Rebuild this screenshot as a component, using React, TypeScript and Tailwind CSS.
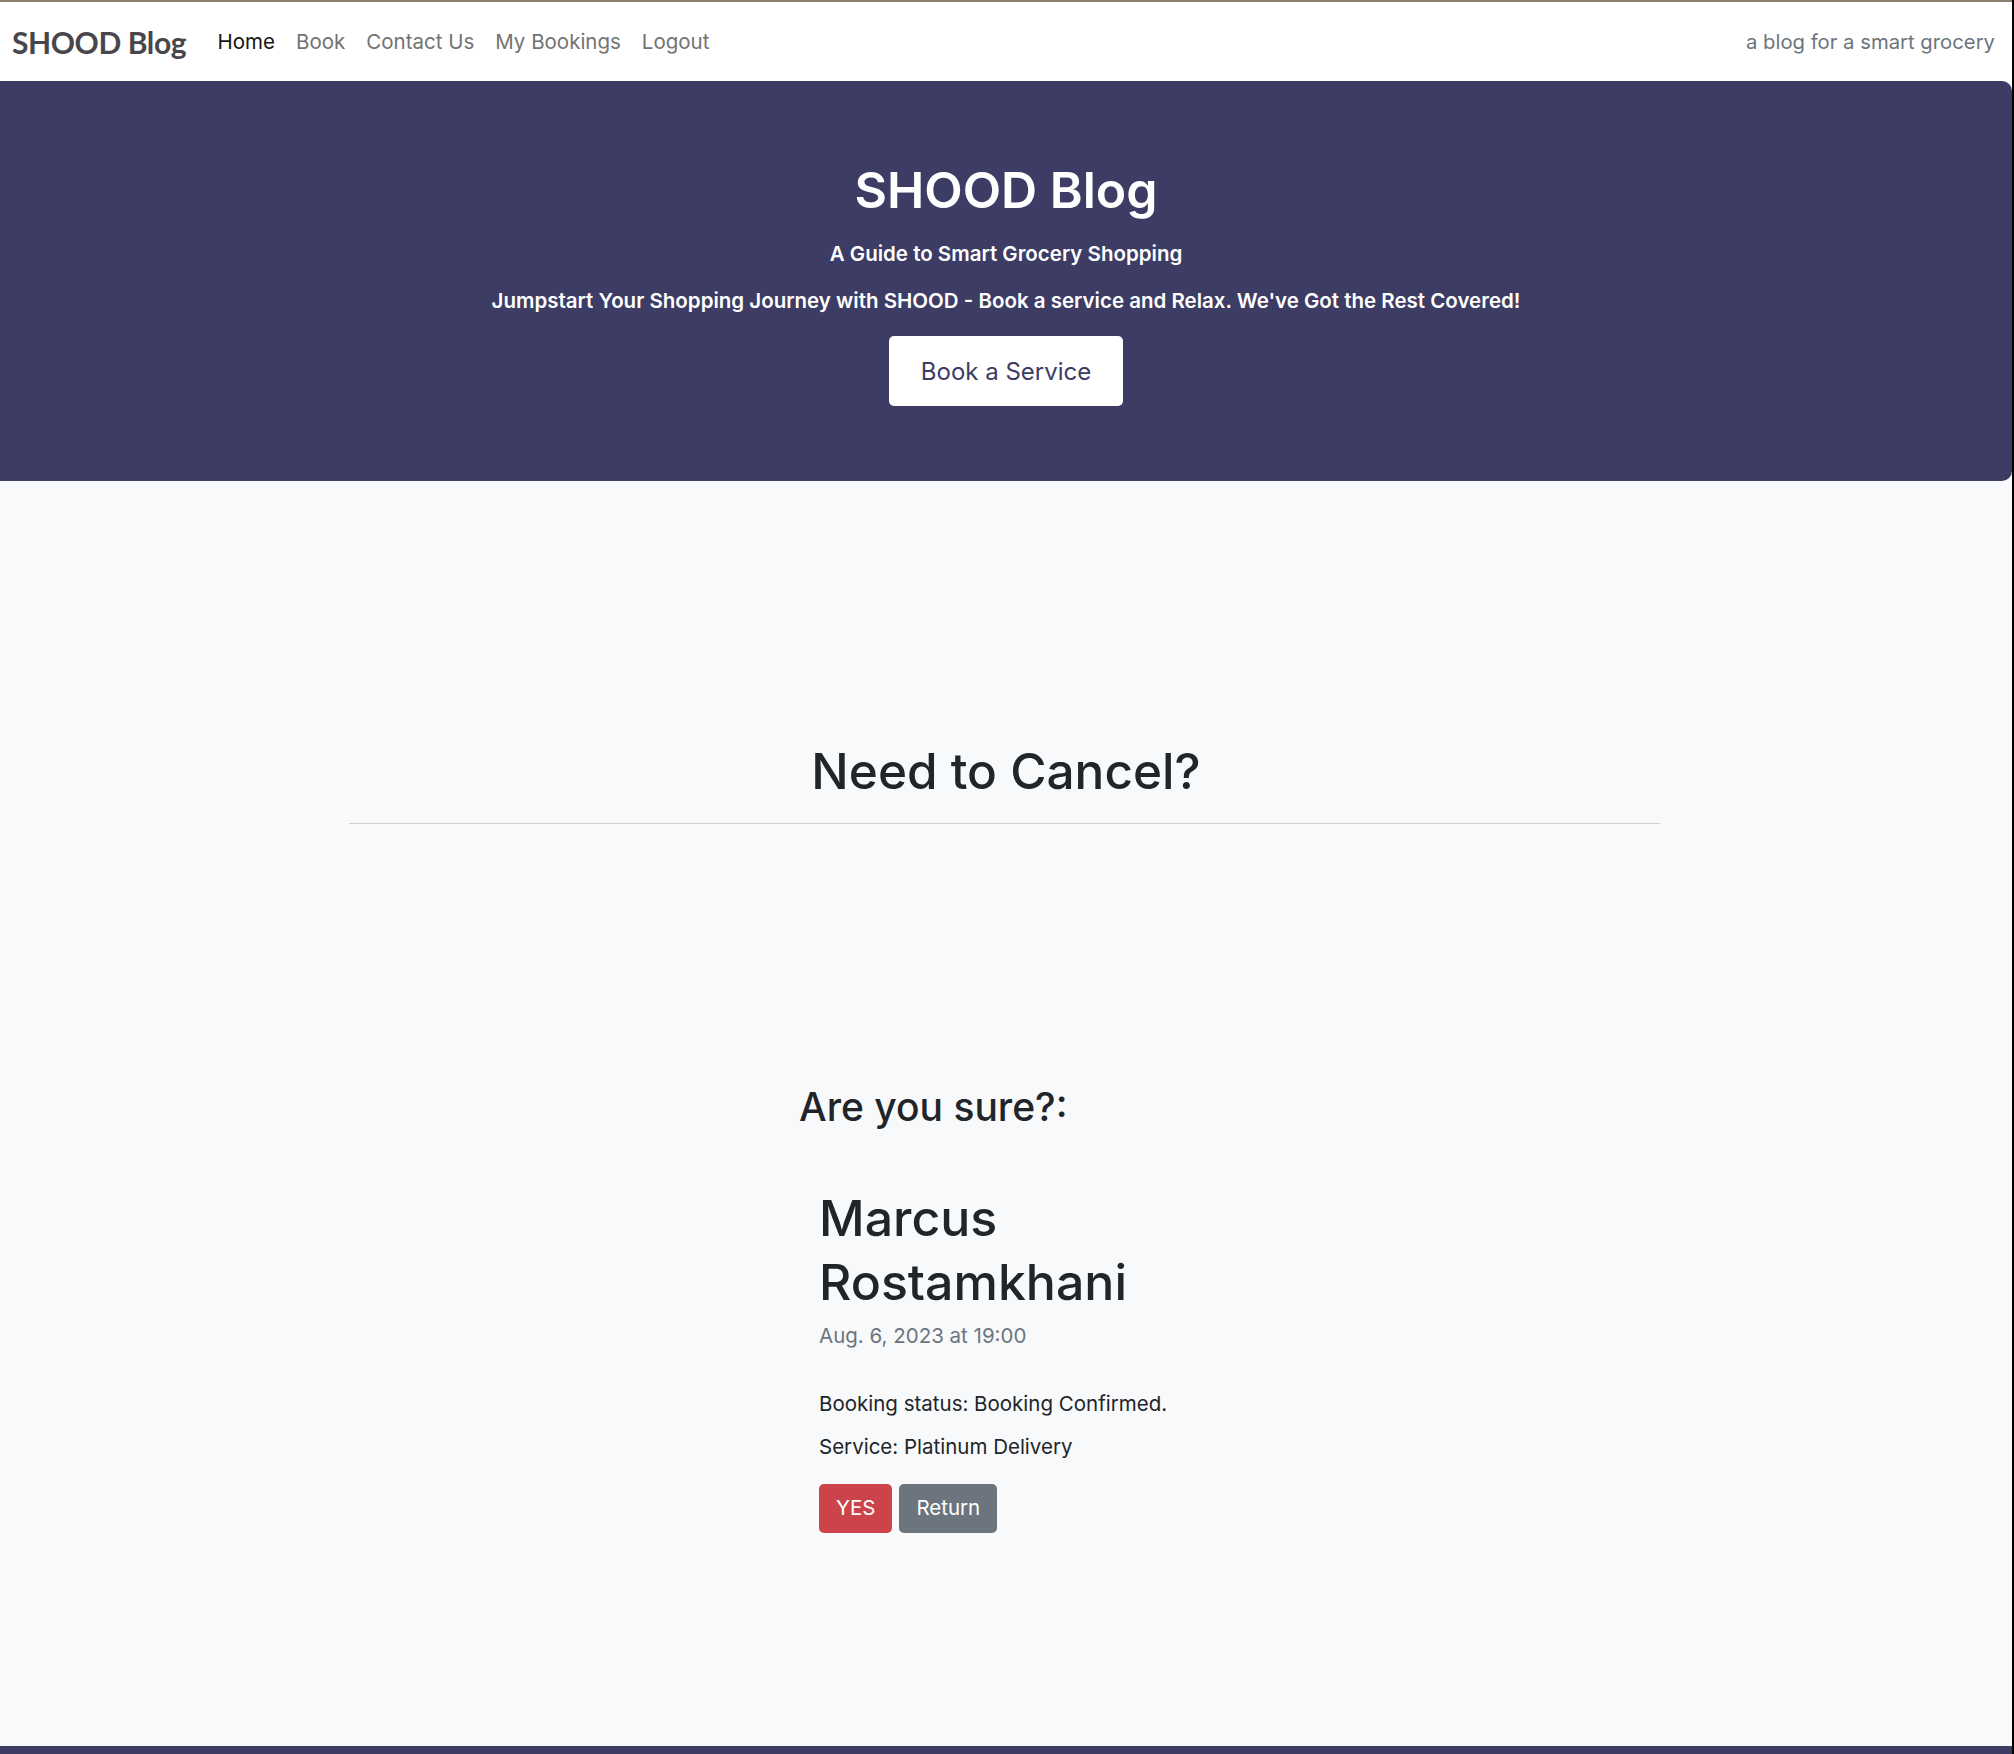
import React from 'react';

const NAV_LINKS = [
  { label: 'Home', active: true },
  { label: 'Book', active: false },
  { label: 'Contact Us', active: false },
  { label: 'My Bookings', active: false },
  { label: 'Logout', active: false },
];

const Navbar: React.FC = () => (
  <header className="h-[79px] bg-white flex items-center justify-between pl-[12px] pr-[17px]">
    <div className="flex items-center">
      <a href="#" className="font-['Lato',sans-serif] font-bold text-[30px] leading-none text-[#47474b] tracking-[-0.4px] mr-[21px]">
        SHOOD Blog
      </a>
      <nav className="flex items-center">
        {NAV_LINKS.map((link) => (
          <a
            key={link.label}
            href="#"
            className={`px-[10.5px] text-[20.5px] leading-[30px] ${
              link.active ? 'text-[#151515]' : 'text-[#737373]'
            }`}
          >
            {link.label}
          </a>
        ))}
      </nav>
    </div>
    <span className="text-[20.3px] leading-[30px] text-[#6c757d]">a blog for a smart grocery</span>
  </header>
);

const Hero: React.FC = () => (
  <section className="bg-[#3c3c64] rounded-r-[10px] text-white text-center pt-[79px] pb-[75px] flex flex-col items-center">
    <h1 className="text-[50px] leading-[60px] font-semibold">SHOOD Blog</h1>
    <p className="mt-[19px] text-[20.5px] leading-[30px] font-semibold">A Guide to Smart Grocery Shopping</p>
    <p className="mt-[17px] text-[20.5px] leading-[30px] font-semibold">
      Jumpstart Your Shopping Journey with SHOOD - Book a service and Relax. We've Got the Rest Covered!
    </p>
    <button className="mt-[20px] h-[70px] px-[32px] bg-white text-[#3c3c64] text-[24px] leading-[37px] rounded-[5px]">
      Book a Service
    </button>
  </section>
);

const CancelCard: React.FC = () => (
  <div className="p-[20px]">
    <h1 className="text-[50px] leading-[64px] font-medium text-[#212529]">Marcus Rostamkhani</h1>
    <p className="mt-[7px] text-[20.5px] leading-[30px] text-[#6c757d]">Aug. 6, 2023 at 19:00</p>
    <p className="mt-[38px] text-[20.5px] leading-[30px] text-[#212529]">Booking status: Booking Confirmed.</p>
    <p className="mt-[13px] text-[20.5px] leading-[30px] text-[#212529]">Service: Platinum Delivery</p>
    <div className="mt-[22px] flex gap-[7px]">
      <button className="h-[49px] px-[17px] bg-[#cc444b] text-white text-[20.5px] rounded-[5px]">YES</button>
      <button className="h-[49px] px-[17px] bg-[#6c757d] text-white text-[20.5px] rounded-[5px]">Return</button>
    </div>
  </div>
);

const App: React.FC = () => {
  return (
    <div className="min-h-screen flex font-['Inter',sans-serif] bg-black">
      <div className="flex-1 min-w-0 flex flex-col bg-[#f8f9fa]">
        <div className="h-[2px] bg-[#8b7d6b]" />
        <Navbar />
        <Hero />

        <main className="h-[1265px] flex flex-col items-center">
          <h1 className="mt-[260px] text-[49.5px] leading-[60px] font-medium text-[#212529]">Need to Cancel?</h1>
          <hr className="mt-[22px] w-[1311px] -translate-x-[2px] border-t border-[#cfd0d2]" />

          <div className="mt-[259px] w-[414px]">
            <h2 className="text-[39px] leading-[48px] font-medium text-[#212529]">Are you sure?:</h2>
            <div className="mt-[35px]">
              <CancelCard />
            </div>
          </div>
        </main>

        <footer className="h-[200px] bg-[#3c3c64]" />
      </div>
      <div className="w-[2px] bg-black" />
    </div>
  );
};

export default App;
